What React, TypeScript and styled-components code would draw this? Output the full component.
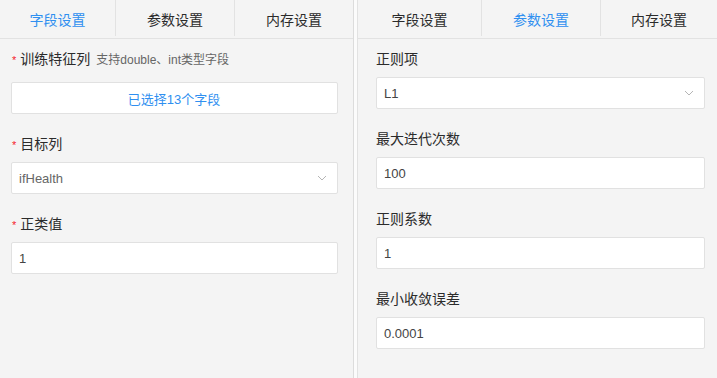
import React from "react";
import styled, { createGlobalStyle } from "styled-components";

const Global = createGlobalStyle`
  html, body { margin: 0; padding: 0; background: #f4f4f4; }
  body { font-family: "Liberation Sans", "Noto Sans CJK SC", sans-serif; color: #333; }
  * { box-sizing: border-box; }
`;

const Page = styled.div`
  display: flex;
  width: 717px;
  height: 378px;
  overflow: hidden;
  background: #f4f4f4;
`;

const Panel = styled.section<{ $w?: number }>`
  display: flex;
  flex-direction: column;
  ${(p) => (p.$w ? `width: ${p.$w}px; flex: none;` : `flex: 1; min-width: 0;`)}
  height: 100%;
  background: #f4f4f4;
`;

const LeftPanel = styled(Panel)`
  border-right: 1px solid #dcdcdc;
`;

const RightPanel = styled(Panel)`
  border-left: 1px solid #e2e2e2;
`;

const Gutter = styled.div`
  width: 3px;
  flex: none;
  background: #fbfbfb;
`;

const Tabs = styled.div<{ $cols: string }>`
  display: grid;
  grid-template-columns: ${(p) => p.$cols};
  height: 39px;
  border-bottom: 1px solid #e2e2e2;
  flex: none;
`;

const Tab = styled.div<{ $active?: boolean; $sep?: boolean }>`
  display: flex;
  align-items: center;
  justify-content: center;
  height: 36px;
  font-size: 14px;
  color: ${(p) => (p.$active ? "#2f8ff0" : "#2b2b2b")};
  border-left: ${(p) => (p.$sep ? "1px solid #e2e2e2" : "none")};
  padding-top: 1px;
`;

const Form = styled.div<{ $pl: number; $pr: number }>`
  display: flex;
  flex-direction: column;
  gap: 19px;
  padding: 9px ${(p) => p.$pr}px 0 ${(p) => p.$pl}px;
`;

const Field = styled.div`
  display: flex;
  flex-direction: column;
`;

const Label = styled.div<{ $extra?: boolean }>`
  display: flex;
  align-items: center;
  height: 20px;
  margin-bottom: ${(p) => (p.$extra ? 14 : 9)}px;
  font-size: 14px;
  color: #2b2b2b;
  white-space: nowrap;
`;

const Star = styled.span`
  color: #f5222d;
  font-size: 11px;
  margin: 0 4px 0 1px;
  position: relative;
  top: 2px;
`;

const Hint = styled.span`
  font-size: 12px;
  color: #666;
  margin-left: 6px;
`;

const Box = styled.div<{ $muted?: boolean }>`
  display: flex;
  align-items: center;
  height: 32px;
  padding: 0 8px 0 7px;
  background: #fff;
  border: 1px solid #e1e1e1;
  border-radius: 2px;
  font-size: 13px;
  color: ${(p) => (p.$muted ? "#666" : "#444")};
`;

const PickButton = styled(Box)`
  justify-content: center;
  color: #2f8ff0;
`;

const Value = styled.span`
  flex: 1;
`;

const Chevron = () => (
  <svg width="10" height="6" viewBox="0 0 10 6" style={{ marginRight: 2 }}>
    <path d="M1 1 L5 5 L9 1" fill="none" stroke="#b5b5b5" strokeWidth="1" />
  </svg>
);

const TabBar = ({ cols, active }: { cols: string; active: number }) => (
  <Tabs $cols={cols}>
    {["字段设置", "参数设置", "内存设置"].map((t, i) => (
      <Tab key={t} $active={i === active} $sep={i > 0}>
        {t}
      </Tab>
    ))}
  </Tabs>
);

export default function App() {
  return (
    <>
      <Global />
      <Page>
        <LeftPanel $w={354}>
          <TabBar cols="115px 119px 1fr" active={0} />
          <Form $pl={11} $pr={15}>
            <Field>
              <Label $extra>
                <Star>*</Star>训练特征列<Hint>支持double、int类型字段</Hint>
              </Label>
              <PickButton>已选择13个字段</PickButton>
            </Field>
            <Field>
              <Label>
                <Star>*</Star>目标列
              </Label>
              <Box $muted>
                <Value>ifHealth</Value>
                <Chevron />
              </Box>
            </Field>
            <Field>
              <Label>
                <Star>*</Star>正类值
              </Label>
              <Box>
                <Value>1</Value>
              </Box>
            </Field>
          </Form>
        </LeftPanel>
        <Gutter />
        <RightPanel>
          <TabBar cols="123px 119px 1fr" active={1} />
          <Form $pl={18} $pr={12}>
            <Field>
              <Label>正则项</Label>
              <Box>
                <Value>L1</Value>
                <Chevron />
              </Box>
            </Field>
            <Field>
              <Label>最大迭代次数</Label>
              <Box>
                <Value>100</Value>
              </Box>
            </Field>
            <Field>
              <Label>正则系数</Label>
              <Box>
                <Value>1</Value>
              </Box>
            </Field>
            <Field>
              <Label>最小收敛误差</Label>
              <Box>
                <Value>0.0001</Value>
              </Box>
            </Field>
          </Form>
        </RightPanel>
      </Page>
    </>
  );
}
